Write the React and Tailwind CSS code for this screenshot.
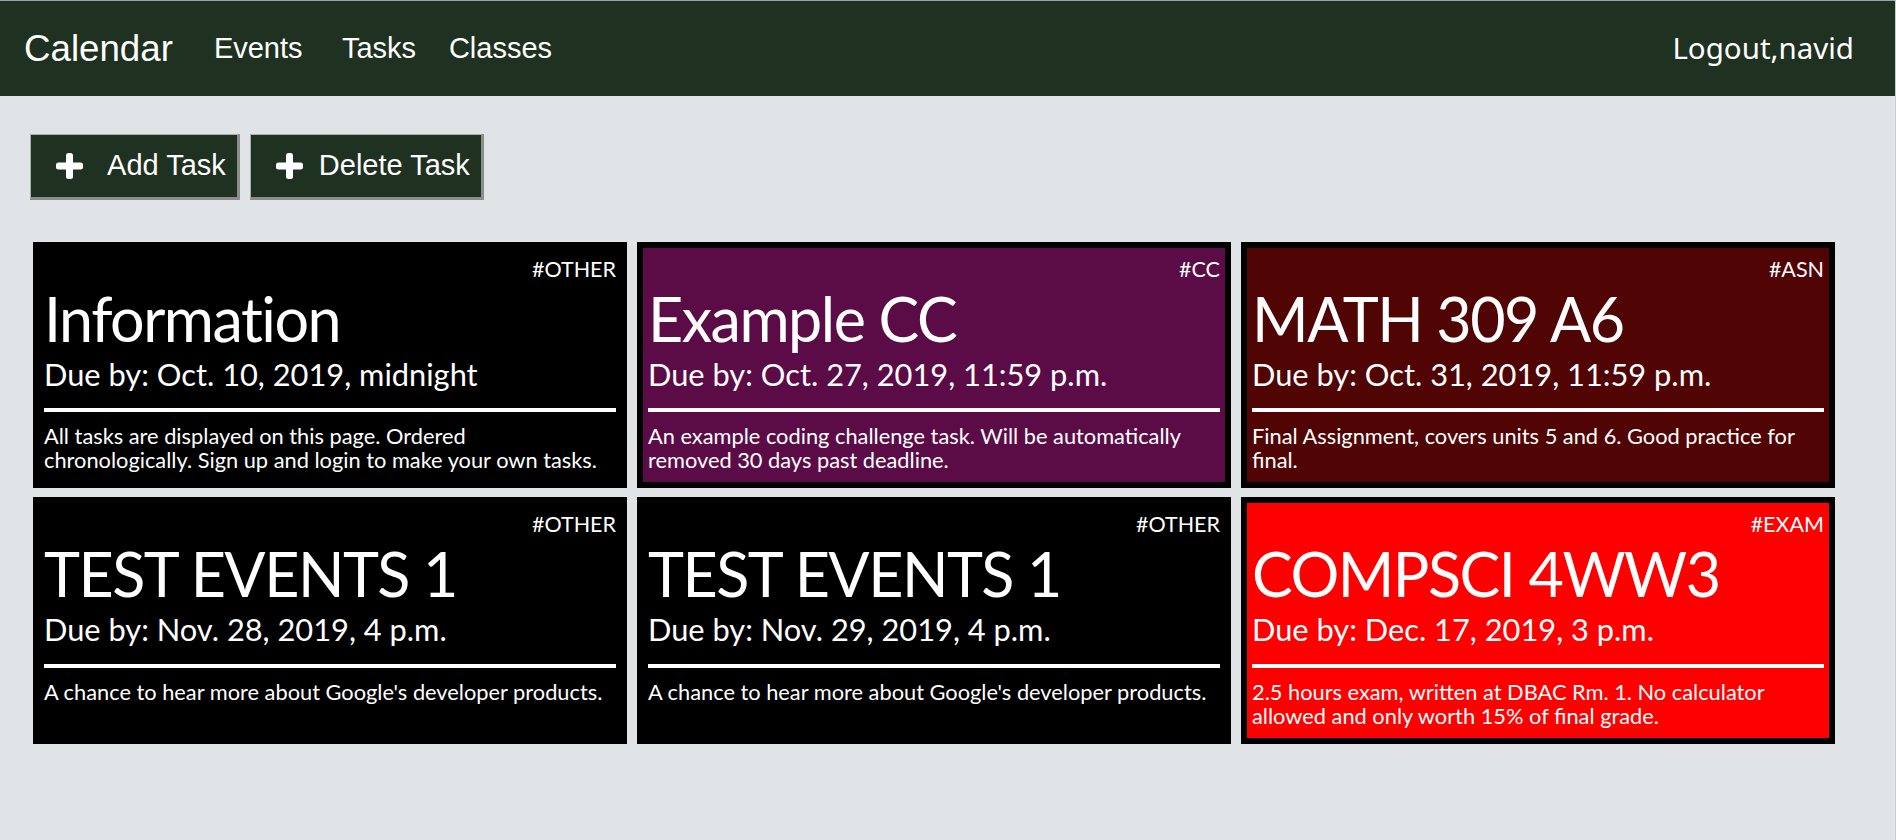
import React from 'react';

const tasks = [
    {
        tag: '#OTHER',
        title: 'Information',
        due: 'Oct. 10, 2019, midnight',
        body: 'All tasks are displayed on this page. Ordered chronologically. Sign up and login to make your own tasks.',
        color: 'bg-black',
    },
    {
        tag: '#CC',
        title: 'Example CC',
        due: 'Oct. 27, 2019, 11:59 p.m.',
        body: 'An example coding challenge task. Will be automatically removed 30 days past deadline.',
        color: 'bg-[#5b0c47]',
    },
    {
        tag: '#ASN',
        title: 'MATH 309 A6',
        due: 'Oct. 31, 2019, 11:59 p.m.',
        body: 'Final Assignment, covers units 5 and 6. Good practice for final.',
        color: 'bg-[#500404]',
    },
    {
        tag: '#OTHER',
        title: 'TEST EVENTS 1',
        due: 'Nov. 28, 2019, 4 p.m.',
        body: "A chance to hear more about Google's developer products.",
        color: 'bg-black',
    },
    {
        tag: '#OTHER',
        title: 'TEST EVENTS 1',
        due: 'Nov. 29, 2019, 4 p.m.',
        body: "A chance to hear more about Google's developer products.",
        color: 'bg-black',
    },
    {
        tag: '#EXAM',
        title: 'COMPSCI 4WW3',
        due: 'Dec. 17, 2019, 3 p.m.',
        body: '2.5 hours exam, written at DBAC Rm. 1. No calculator allowed and only worth 15% of final grade.',
        color: 'bg-[#ff0000]',
    },
];

const PlusIcon = () => (
    <svg width="27" height="26" viewBox="0 0 27 26" className="shrink-0">
        <rect x="0" y="9.5" width="27" height="7" rx="2.5" fill="white" />
        <rect x="10" y="0" width="7" height="26" rx="2.5" fill="white" />
    </svg>
);

const TaskCard = ({ task }) => (
    <div className={`border-[6px] border-black ${task.color} font-['Lato',sans-serif] text-white pt-[11px] px-[5px] pb-[10px] flex flex-col`}>
        <div className="text-right text-[21.5px] leading-none">{task.tag}</div>
        <h2 className="mt-[7px] text-[61px] leading-none tracking-[-1.5px]">{task.title}</h2>
        <h4 className="mt-[11px] text-[30.8px] leading-none">Due by: {task.due}</h4>
        <div className="mt-[18px] h-[4px] bg-white" />
        <p className="mt-[12px] pr-3 text-[21.8px] leading-6">{task.body}</p>
    </div>
);

const App = () => {
    return (
        <div className="min-h-screen bg-[#e0e4e7] border-r border-[#c8ccd0] font-['Liberation_Sans',sans-serif]">
            {/* Navbar */}
            <nav className="h-[96px] bg-[#1f3120] border-t border-[#9aa4a8] flex items-center pl-[24px] pr-[41px] text-white">
                <a className="text-[36.7px]">Calendar</a>
                <div className="ml-[41px] flex items-center text-[29px]">
                    <a className="w-[128px]">Events</a>
                    <a className="w-[107px]">Tasks</a>
                    <a>Classes</a>
                </div>
                <a className="ml-auto font-['Noto_Sans',sans-serif] text-[29.5px]">Logout,navid</a>
            </nav>

            {/* Actions */}
            <div className="mt-[38px] ml-[30px] flex gap-[10px]">
                <button className="h-[66px] pl-[25px] pr-[11px] flex items-center gap-4 bg-[#1f3120] text-white text-[29px] border-t border-l border-r-[3px] border-b-[3px] border-t-[#a9aea9] border-l-[#a9aea9] border-r-[#8a8d8a] border-b-[#8a8d8a]">
                    <PlusIcon />
                    <span>&nbsp;Add Task</span>
                </button>
                <button className="h-[66px] pl-[25px] pr-[11px] flex items-center gap-4 bg-[#1f3120] text-white text-[29px] border-t border-l border-r-[3px] border-b-[3px] border-t-[#a9aea9] border-l-[#a9aea9] border-r-[#8a8d8a] border-b-[#8a8d8a]">
                    <PlusIcon />
                    <span>Delete Task</span>
                </button>
            </div>

            {/* Task cards */}
            <div className="mt-[42px] ml-[33px] w-[1802px] grid grid-cols-3 gap-x-[10px] gap-y-[9px]">
                {tasks.map((task, i) => (
                    <TaskCard key={i} task={task} />
                ))}
            </div>
        </div>
    );
};

export default App;
